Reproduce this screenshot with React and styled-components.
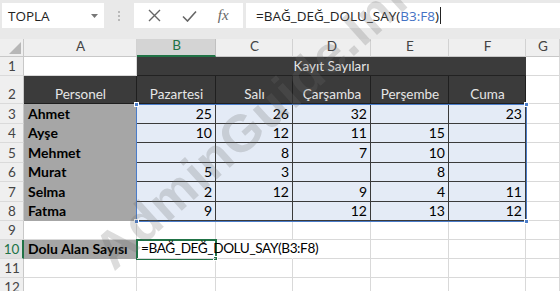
import React from "react";
import styled, { createGlobalStyle } from "styled-components";

const GlobalStyle = createGlobalStyle`
  html, body { margin: 0; padding: 0; background: #fff; }
  * { box-sizing: border-box; }
`;

const Page = styled.div`
  position: relative;
  width: 560px;
  height: 291px;
  overflow: hidden;
  background: #fff;
  font-family: Lato, "Open Sans", sans-serif;
`;

const Toolbar = styled.div`
  display: flex;
  align-items: flex-start;
  height: 39px;
  padding: 3px 0 0 2px;
  background: #e9e9e9;
  font-family: "Open Sans", "Noto Sans", sans-serif;
`;

const NameBox = styled.div`
  display: flex;
  align-items: center;
  justify-content: space-between;
  width: 102px;
  height: 25px;
  padding: 0 6px 0 6px;
  background: #fff;
  font-size: 13.5px;
  color: #222;
`;

const Dots = styled.div`
  display: flex;
  flex-direction: column;
  align-items: center;
  justify-content: center;
  gap: 2px;
  width: 30px;
  height: 25px;
  span {
    width: 2px;
    height: 2px;
    background: #a8a8a8;
    border-radius: 1px;
  }
`;

const IconBox = styled.div`
  display: flex;
  align-items: center;
  justify-content: space-around;
  width: 109px;
  height: 25px;
  padding: 0 4px;
  background: #fff;
  color: #666;
`;

const Fx = styled.span`
  font-family: "Liberation Serif", serif;
  font-style: italic;
  font-size: 15px;
  color: #666;
`;

const FormulaInput = styled.div`
  flex: 1;
  display: flex;
  align-items: center;
  height: 25px;
  margin-left: 3px;
  padding-left: 10px;
  background: #fff;
  font-size: 13.5px;
  color: #222;
  white-space: nowrap;
`;

const RefText = styled.span`
  color: #4472c4;
`;

const Caret = styled.span`
  display: inline-block;
  width: 1px;
  height: 17px;
  background: #222;
  margin-left: 1px;
`;

const Sheet = styled.div`
  position: relative;
  display: grid;
  grid-template-columns: 24px 113px 79px 77px 78px 78px 77px 34px;
  grid-template-rows: 18px 19px 28px 20px 19px 20px 19px 20px 19px 19px 19px 19px 19px;
`;

const variants = {
  blank: { bg: "transparent", rb: "#d9d9d9", bb: "#d9d9d9", color: "#000" },
  dark: { bg: "#3b3b3b", rb: "#1f1f1f", bb: "#1f1f1f", color: "#e6e6e6" },
  darkTop: { bg: "#3b3b3b", rb: "#3b3b3b", bb: "#222", color: "#e6e6e6" },
  name: { bg: "#a6a6a6", rb: "#a6a6a6", bb: "#a6a6a6", color: "#000" },
  num: { bg: "#e4ebf6", rb: "#3a3a3a", bb: "#3a3a3a", color: "#000" },
  colHead: { bg: "#efefef", rb: "#d2d2d2", bb: "#c8c8c8", color: "#444" },
  colHeadSel: { bg: "#d4d4d4", rb: "#c0c0c0", bb: "#217346", color: "#217346" },
  rowHead: { bg: "#efefef", rb: "#c8c8c8", bb: "#dadada", color: "#444" },
  rowHeadSel: { bg: "#e0e0e0", rb: "#217346", bb: "#dadada", color: "#217346" },
};

const Cell = styled.div`
  position: relative;
  grid-column: ${(p) => p.$col} / span ${(p) => p.$span || 1};
  grid-row: ${(p) => p.$row} / span 1;
  display: flex;
  align-items: ${(p) => (p.$mid ? "center" : "flex-end")};
  justify-content: ${(p) => p.$align || "flex-start"};
  padding: 0 3px 2px 4px;
  background: ${(p) => variants[p.$v].bg};
  border-right: ${(p) => (p.$v === "rowHeadSel" ? 2 : 1)}px solid
    ${(p) => (p.$noRight ? "transparent" : variants[p.$v].rb)};
  border-bottom: ${(p) => (p.$v === "colHeadSel" ? 2 : 1)}px solid
    ${(p) => variants[p.$v].bb};
  color: ${(p) => variants[p.$v].color};
  font-size: ${(p) => p.$size || 14}px;
  letter-spacing: ${(p) => p.$track || 0}px;
  font-weight: ${(p) => (p.$bold ? 700 : 400)};
  line-height: 1;
  white-space: nowrap;
  z-index: ${(p) => (p.$front ? 4 : "auto")};
`;

const Corner = styled.div`
  grid-column: 1;
  grid-row: 1;
  position: relative;
  background: #efefef;
  border-right: 1px solid #c8c8c8;
  border-bottom: 1px solid #c8c8c8;
  svg { position: absolute; right: 2px; bottom: 2px; }
`;

const RangeBox = styled.div`
  position: absolute;
  left: 136px;
  top: 65px;
  width: 391px;
  height: 118px;
  border: 1.5px solid #4a7cc9;
  pointer-events: none;
  z-index: 3;
`;

const Handle = styled.span`
  position: absolute;
  width: 5px;
  height: 5px;
  background: ${(p) => p.$color};
  border: 1px solid #fff;
  ${(p) => (p.$top ? "top: -3px;" : "bottom: -3px;")}
  ${(p) => (p.$left ? "left: -3px;" : "right: -3px;")}
`;

const ActiveBox = styled.div`
  position: absolute;
  left: 136px;
  top: 200px;
  width: 81px;
  height: 21px;
  border: 2px solid #217346;
  pointer-events: none;
  z-index: 3;
`;

const Watermark = styled.div`
  position: absolute;
  left: 82px;
  top: 236px;
  transform: rotate(-42deg);
  transform-origin: left top;
  font-family: "Liberation Sans", Arial, sans-serif;
  font-weight: 700;
  font-size: 52px;
  letter-spacing: 1px;
  color: rgba(110, 110, 110, 0.24);
  white-space: nowrap;
  pointer-events: none;
  z-index: 5;
`;

const cols = ["A", "B", "C", "D", "E", "F", "G"];
const days = ["Pazartesi", "Salı", "Çarşamba", "Perşembe", "Cuma"];
const people = [
  ["Ahmet", 25, 26, 32, null, 23],
  ["Ayşe", 10, 12, 11, 15, null],
  ["Mehmet", null, 8, 7, 10, null],
  ["Murat", 5, 3, null, 8, null],
  ["Selma", 2, 12, 9, 4, 11],
  ["Fatma", 9, null, 12, 13, 12],
];

export default function App() {
  const cells = [];
  cols.forEach((c, i) => {
    cells.push(
      <Cell key={"h" + c} $row={1} $col={i + 2} $v={c === "B" ? "colHeadSel" : "colHead"} $align="center" $mid $size={13.5}>
        {c}
      </Cell>
    );
  });
  for (let r = 1; r <= 12; r++) {
    cells.push(
      <Cell key={"r" + r} $row={r + 1} $col={1} $v={r === 10 ? "rowHeadSel" : "rowHead"} $align="center" $size={13.5}>
        {r}
      </Cell>
    );
  }
  cells.push(<Cell key="A1" $row={2} $col={2} $v="blank" />);
  cells.push(
    <Cell key="B1" $row={2} $col={3} $span={5} $v="darkTop" $align="center" $size={13.5}>
      Kayıt Sayıları
    </Cell>
  );
  cells.push(<Cell key="G1" $row={2} $col={8} $v="blank" />);
  cells.push(
    <Cell key="A2" $row={3} $col={2} $v="dark" $align="center" $size={13.5}>
      Personel
    </Cell>
  );
  days.forEach((d, i) => {
    cells.push(
      <Cell key={"d" + i} $row={3} $col={i + 3} $v="dark" $align="center" $size={13.5}>
        {d}
      </Cell>
    );
  });
  cells.push(<Cell key="G2" $row={3} $col={8} $v="blank" />);
  people.forEach((p, ri) => {
    const row = ri + 4;
    cells.push(
      <Cell key={"n" + ri} $row={row} $col={2} $v="name" $bold>
        {p[0]}
      </Cell>
    );
    p.slice(1).forEach((v, ci) => {
      cells.push(
        <Cell key={"v" + ri + ci} $row={row} $col={ci + 3} $v="num" $align="flex-end">
          {v}
        </Cell>
      );
    });
    cells.push(<Cell key={"g" + ri} $row={row} $col={8} $v="blank" />);
  });
  for (let r = 9; r <= 12; r++) {
    const row = r + 1;
    for (let c = 2; c <= 8; c++) {
      if (r === 10 && c === 2) {
        cells.push(
          <Cell key={"x" + r + c} $row={row} $col={c} $v="name" $bold>
            Dolu Alan Sayısı
          </Cell>
        );
      } else if (r === 10 && c === 3) {
        cells.push(
          <Cell key={"x" + r + c} $row={row} $col={c} $v="blank" $noRight $front $size={13.6} $track={-0.4}>
            =BAĞ_DEĞ_DOLU_SAY(B3:F8)
          </Cell>
        );
      } else {
        cells.push(
          <Cell key={"x" + r + c} $row={row} $col={c} $v="blank" $noRight={r === 10 && c === 4} />
        );
      }
    }
  }

  return (
    <Page>
      <GlobalStyle />
      <Toolbar>
        <NameBox>
          <span>TOPLA</span>
          <svg width="7" height="4" viewBox="0 0 7 4">
            <path d="M0 0 L7 0 L3.5 4 Z" fill="#777" />
          </svg>
        </NameBox>
        <Dots>
          <span />
          <span />
          <span />
        </Dots>
        <IconBox>
          <svg width="13" height="13" viewBox="0 0 13 13">
            <path d="M1 1 L12 12 M12 1 L1 12" stroke="#666" strokeWidth="1.4" />
          </svg>
          <svg width="15" height="12" viewBox="0 0 15 12">
            <path d="M1 6.5 L5.5 11 L14 1.5" stroke="#666" strokeWidth="1.6" fill="none" />
          </svg>
          <Fx>fx</Fx>
        </IconBox>
        <FormulaInput>
          =BAĞ_DEĞ_DOLU_SAY(<RefText>B3:F8</RefText>)
          <Caret />
        </FormulaInput>
      </Toolbar>
      <Sheet>
        <Corner>
          <svg width="12" height="12" viewBox="0 0 12 12">
            <path d="M12 0 L12 12 L0 12 Z" fill="#b7b7b7" />
          </svg>
        </Corner>
        {cells}
        <RangeBox>
          <Handle $color="#4a7cc9" $top $left />
          <Handle $color="#4a7cc9" $top />
          <Handle $color="#4a7cc9" $left />
          <Handle $color="#4a7cc9" />
        </RangeBox>
        <ActiveBox>
          <Handle $color="#217346" />
        </ActiveBox>
      </Sheet>
      <Watermark>AdminGuide.Info</Watermark>
    </Page>
  );
}
